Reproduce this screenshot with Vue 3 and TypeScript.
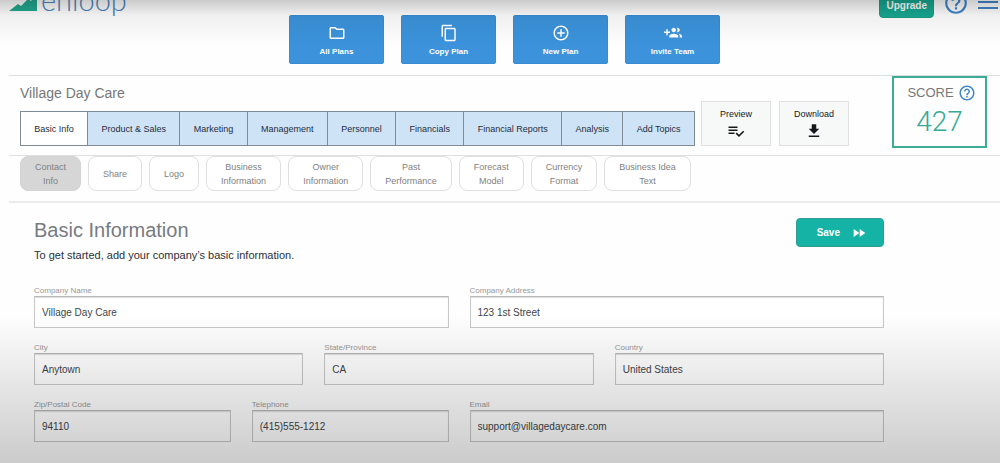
<script setup lang="ts">
import { reactive, ref } from 'vue'

interface Action { label: string; path: string }
interface Field { id: string; label: string; type: string; span: number }

const actions: Action[] = [
  { label: 'All Plans', path: 'M9.17 6l2 2H20v10H4V6h5.17M10 4H4c-1.1 0-1.99.9-1.99 2L2 18c0 1.1.9 2 2 2h16c1.1 0 2-.9 2-2V8c0-1.1-.9-2-2-2h-8l-2-2z' },
  { label: 'Copy Plan', path: 'M16 1H4c-1.1 0-2 .9-2 2v14h2V3h12V1zm3 4H8c-1.1 0-2 .9-2 2v14c0 1.1.9 2 2 2h11c1.1 0 2-.9 2-2V7c0-1.1-.9-2-2-2zm0 16H8V7h11v14z' },
  { label: 'New Plan', path: 'M13 7h-2v4H7v2h4v4h2v-4h4v-2h-4V7zm-1-5C6.48 2 2 6.48 2 12s4.48 10 10 10 10-4.48 10-10S17.52 2 12 2zm0 18c-4.41 0-8-3.59-8-8s3.59-8 8-8 8 3.59 8 8-3.59 8-8 8z' },
  { label: 'Invite Team', path: 'M8 10H5V7H3v3H0v2h3v3h2v-3h3v-2zm10 1c1.66 0 2.99-1.34 2.99-3S19.66 5 18 5c-.32 0-.63.05-.91.14.57.81.9 1.79.9 2.86s-.34 2.04-.9 2.86c.28.09.59.14.91.14zm-5 0c1.66 0 2.99-1.34 2.99-3S14.66 5 13 5c-1.66 0-3 1.34-3 3s1.34 3 3 3zm6.62 2.16c.83.73 1.38 1.66 1.38 2.84v2h3v-2c0-1.54-2.37-2.49-4.38-2.84zM13 13c-2 0-6 1-6 3v2h12v-2c0-2-4-3-6-3z' },
]

const outputs: Action[] = [
  { label: 'Preview', path: 'M14 10H2v2h12v-2zm0-4H2v2h12V6zM2 16h8v-2H2v2zm19.500-4.500L23 13l-6.990 7-4.510-4.500L13 14l3.010 3 5.490-5.500z' },
  { label: 'Download', path: 'M19 9h-4V3H9v6H5l7 7 7-7zM5 18v2h14v-2H5z' },
]

const helpPath = 'M11 18h2v-2h-2v2zm1-16C6.48 2 2 6.48 2 12s4.48 10 10 10 10-4.48 10-10S17.52 2 12 2zm0 18c-4.41 0-8-3.59-8-8s3.59-8 8-8 8 3.59 8 8-3.59 8-8 8zm0-14c-2.21 0-4 1.79-4 4h2c0-1.100.9-2 2-2s2 .9 2 2c0 2-3 1.750-3 5h2c0-2.250 3-2.500 3-5 0-2.210-1.790-4-4-4z'

const tabs = ['Basic Info', 'Product & Sales', 'Marketing', 'Management', 'Personnel', 'Financials', 'Financial Reports', 'Analysis', 'Add Topics']
const pages = ['Contact\nInfo', 'Share', 'Logo', 'Business\nInformation', 'Owner\nInformation', 'Past\nPerformance', 'Forecast\nModel', 'Currency\nFormat', 'Business Idea\nText']

const activeTab = ref(tabs[0])
const activePage = ref(pages[0])

const fields: Field[] = [
  { id: 'company', label: 'Company Name', type: 'text', span: 6 },
  { id: 'address', label: 'Company Address', type: 'text', span: 6 },
  { id: 'city', label: 'City', type: 'text', span: 4 },
  { id: 'state', label: 'State/Province', type: 'text', span: 4 },
  { id: 'country', label: 'Country', type: 'text', span: 4 },
  { id: 'zip', label: 'Zip/Postal Code', type: 'text', span: 3 },
  { id: 'phone', label: 'Telephone', type: 'tel', span: 3 },
  { id: 'email', label: 'Email', type: 'email', span: 6 },
]

const values = reactive<Record<string, string>>({
  company: 'Village Day Care',
  address: '123 1st Street',
  city: 'Anytown',
  state: 'CA',
  country: 'United States',
  zip: '94110',
  phone: '(415)555-1212',
  email: 'support@villagedaycare.com',
})
</script>

<template>
  <div class="page">
    <header class="topbar">
      <a class="logo" href="#">
        <svg class="logo-mark" viewBox="0 0 28 22" aria-hidden="true">
          <path d="M0 22L9 15L12 17L19 10L22 12L28 4V22Z" />
        </svg>
        <span>enloop</span>
      </a>
      <nav class="actions" aria-label="Plans">
        <button v-for="a in actions" :key="a.label" type="button" class="action">
          <svg class="icon" viewBox="0 0 24 24" aria-hidden="true"><path :d="a.path" /></svg>
          <span>{{ a.label }}</span>
        </button>
      </nav>
      <div class="tools">
        <button type="button" class="upgrade">Upgrade</button>
        <button type="button" class="plain" aria-label="Help">
          <svg class="help-large" viewBox="0 0 24 24" aria-hidden="true"><path :d="helpPath" /></svg>
        </button>
        <button type="button" class="plain" aria-label="Menu">
          <svg class="menu" viewBox="0 0 20 16" aria-hidden="true"><path d="M0 0h20v2H0zM0 6h20v2H0zM0 12h20v2H0z" /></svg>
        </button>
      </div>
    </header>

    <section class="plan">
      <div class="plan-main">
        <h1>Village Day Care</h1>
        <nav class="tabs" aria-label="Plan sections">
          <button v-for="t in tabs" :key="t" type="button" class="tab" :class="{ active: t === activeTab }" @click="activeTab = t">{{ t }}</button>
        </nav>
      </div>
      <div class="outputs">
        <button v-for="o in outputs" :key="o.label" type="button" class="output">
          <span>{{ o.label }}</span>
          <svg class="icon" viewBox="0 0 24 24" aria-hidden="true"><path :d="o.path" /></svg>
        </button>
      </div>
      <aside class="score">
        <div class="score-head">
          <span>SCORE</span>
          <button type="button" class="plain" aria-label="About the score">
            <svg class="icon" viewBox="0 0 24 24" aria-hidden="true"><path :d="helpPath" /></svg>
          </button>
        </div>
        <strong>427</strong>
      </aside>
    </section>

    <nav class="pages" aria-label="Basic info pages">
      <button v-for="p in pages" :key="p" type="button" class="pill" :class="{ active: p === activePage }" @click="activePage = p">{{ p }}</button>
    </nav>

    <form class="form" @submit.prevent>
      <div class="form-head">
        <div>
          <h2>Basic Information</h2>
          <p>To get started, add your company’s basic information.</p>
        </div>
        <button type="submit" class="save">
          <span>Save</span>
          <svg viewBox="0 0 24 24" aria-hidden="true"><path d="M4 18l8.500-6L4 6v12zm9-12v12l8.500-6L13 6z" /></svg>
        </button>
      </div>
      <div class="fields">
        <div v-for="f in fields" :key="f.id" class="field" :class="'span-' + f.span">
          <label :for="f.id">{{ f.label }}</label>
          <input :id="f.id" v-model="values[f.id]" :type="f.type" />
        </div>
      </div>
    </form>
    <div class="shade"></div>
  </div>
</template>

<style>
html,
body {
  background: #fefefe;
  overflow: hidden;
}
</style>

<style scoped>
.page {
  padding-left: 9px;
  font-family: "Liberation Sans", Arial, sans-serif;
  color: #2c3036;
}
.page * {
  box-sizing: border-box;
}
button {
  font: inherit;
  margin: 0;
  cursor: pointer;
}
svg {
  display: block;
  fill: currentColor;
}
.icon {
  width: 18px;
  height: 18px;
}
.plain {
  padding: 0;
  border: 0;
  background: none;
  color: #3f86cc;
}

/* The page is scrolled slightly past its top edge. */
.topbar {
  display: grid;
  grid-template-columns: 1fr auto 1fr;
  align-items: start;
  margin-top: -12px;
  border-bottom: 1px solid #dedede;
}
.logo {
  display: flex;
  align-items: center;
  gap: 4px;
  height: 24px;
  color: #4a86bd;
  font: 300 29px/24px Lato, sans-serif;
  text-decoration: none;
}
.logo-mark {
  width: 28px;
  height: 22px;
  fill: #22a98f;
}
.actions {
  display: flex;
  gap: 17px;
  padding: 27px 0 11px;
}
.action {
  display: flex;
  flex-direction: column;
  align-items: center;
  gap: 5px;
  width: 95px;
  padding: 8px 0 6px;
  border: 1px solid #3a8cd2;
  border-radius: 2px;
  background: #3c93db;
  color: #fff;
  font-size: 8px;
  line-height: 10px;
  font-weight: 700;
}
.tools {
  display: flex;
  justify-content: flex-end;
  align-items: center;
  gap: 9px;
  height: 30px;
  padding-right: 2px;
}
.upgrade {
  align-self: flex-end;
  height: 26px;
  padding: 0 6px;
  border: 1px solid #1c9c86;
  border-radius: 4px;
  background: #17a890;
  color: #fff;
  font-size: 10px;
  font-weight: 700;
}
.help-large {
  width: 26px;
  height: 26px;
}
.menu {
  width: 20px;
  height: 16px;
}

.plan {
  display: flex;
  align-items: flex-end;
  padding: 0 13px 7px 11px;
  border-bottom: 1px solid #e0e0e0;
}
.plan-main {
  flex: 0 1 675px;
  padding-bottom: 2px;
}
h1 {
  margin: 0 0 9px;
  color: #777;
  font-size: 14px;
  line-height: 18px;
  font-weight: 400;
}
.tabs {
  display: flex;
  border: 1px solid #7f8b98;
}
.tab {
  flex: 1 1 auto;
  height: 33px;
  padding: 0 12px;
  border: 0;
  border-left: 1px solid #7f8b98;
  background: #cfe3f7;
  color: #1f2d3b;
  font-size: 9px;
  white-space: nowrap;
}
.tab:first-child {
  border-left: 0;
}
.tab.active {
  background: #fff;
}
.outputs {
  display: flex;
  gap: 8px;
  margin-left: 6px;
  padding-bottom: 2px;
}
.output {
  display: flex;
  flex-direction: column;
  align-items: center;
  gap: 2px;
  width: 70px;
  padding: 7px 0 5px;
  border: 1px solid #e0e0e0;
  background: #f7f8f8;
  color: #16191c;
  font-size: 9px;
  line-height: 11px;
}
.score {
  width: 95px;
  height: 72px;
  margin-left: auto;
  padding-top: 6px;
  border: 2px solid #3cab98;
  text-align: center;
}
.score-head {
  display: flex;
  justify-content: center;
  align-items: center;
  gap: 4px;
  padding-left: 4px;
  color: #777;
  font-size: 13px;
  line-height: 18px;
}
.score strong {
  display: block;
  color: #35aa96;
  font: 300 28px/40px Roboto, sans-serif;
}

.pages {
  display: flex;
  gap: 7px;
  padding: 0 11px 10px;
  border-bottom: 2px solid #ebebeb;
}
.pill {
  height: 35px;
  padding: 0 14px;
  border: 1px solid #dedfe2;
  border-radius: 8px;
  background: #fff;
  color: #818181;
  font-size: 9px;
  line-height: 14px;
  white-space: pre-line;
}
.pill.active {
  border-color: #d3d3d3;
  background: #d6d6d6;
}

.form {
  padding: 15px 116px 0 25px;
}
.form-head {
  display: flex;
  justify-content: space-between;
  align-items: flex-start;
}
h2 {
  margin: 0;
  color: #777b80;
  font-size: 20px;
  line-height: 24px;
  font-weight: 400;
}
p {
  margin: 6px 0 0;
  font-size: 11px;
  line-height: 14px;
}
.save {
  display: flex;
  align-items: center;
  gap: 11px;
  height: 29px;
  padding: 0 16px 0 20px;
  border: 1px solid #2e9f92;
  border-radius: 4px;
  background: #14b3a6;
  color: #fff;
  font-size: 10px;
  font-weight: 700;
}
.save svg {
  width: 16px;
  height: 16px;
}
.fields {
  display: grid;
  grid-template-columns: repeat(12, 1fr);
  gap: 14px 21px;
  margin-top: 23px;
}
.span-3 {
  grid-column: span 3;
}
.span-4 {
  grid-column: span 4;
}
.span-6 {
  grid-column: span 6;
}
label {
  display: block;
  color: #999;
  font-size: 8px;
  line-height: 11px;
}
input {
  display: block;
  width: 100%;
  height: 32px;
  padding: 0 7px;
  border: 1px solid #c9c9c9;
  border-top-color: #b8b8b8;
  border-radius: 0;
  background: #fff;
  box-shadow: inset 0 1px 1px #ddd;
  color: #40454b;
  font: 10px "Liberation Sans", Arial, sans-serif;
}

/* Soft shading along the top and bottom edges of the window. */
.shade {
  position: fixed;
  inset: 0;
  pointer-events: none;
  background:
    linear-gradient(to bottom, rgba(0, 0, 0, 0.2), rgba(0, 0, 0, 0.06) 15px, rgba(0, 0, 0, 0) 45px),
    linear-gradient(to top, rgba(0, 0, 0, 0.2), rgba(0, 0, 0, 0) 148px);
}
</style>
